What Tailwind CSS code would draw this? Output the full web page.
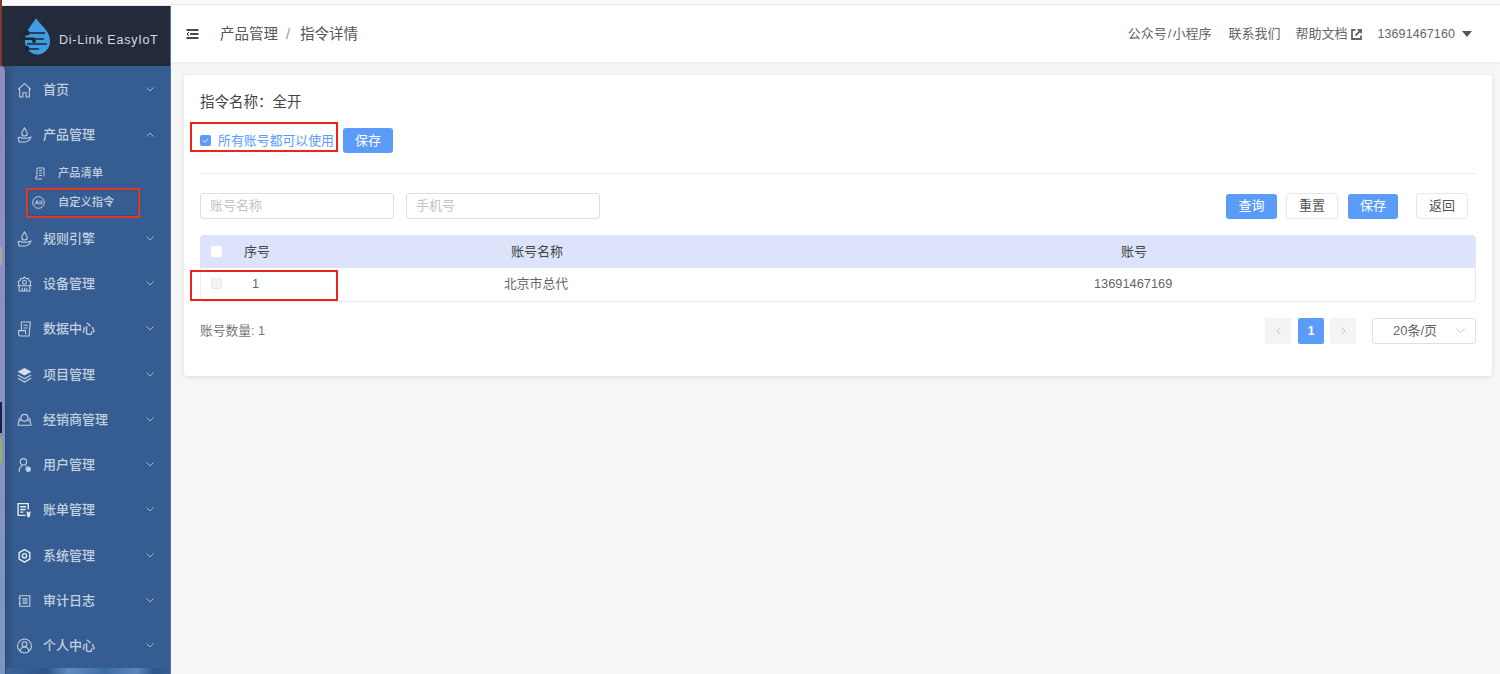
<!DOCTYPE html>
<html lang="zh">
<head>
<meta charset="utf-8">
<script src="https://cdn.jsdelivr.net/npm/@tailwindcss/browser@4"></script>
<title>指令详情</title>
</head>
<body class="m-0 h-[674px] w-[1500px] overflow-hidden bg-[#f6f6f6] font-['Liberation_Sans','Noto_Sans_CJK_SC',sans-serif] text-[13px] text-[#555]">
<div class="relative flex h-[674px] w-[1500px]">
  <!-- Sidebar -->
  <aside class="relative flex h-full w-[171px] shrink-0 flex-col overflow-hidden bg-[#365d91]">
    <div class="h-[6px] shrink-0 bg-[#fafafa] border-b border-[#e6e6e6]"></div>
    <div class="flex h-[60px] shrink-0 items-center bg-[#232a3a] pl-[21px]">
      <svg class="h-[39px] w-[32px]" viewBox="0 0 32 39">
        <path d="M15 1C12 7 4 13 4 24a12.500 13.500 0 0 0 25 0C29 13 18 7 15 1Z" fill="#419be0"/>
        <g stroke="#1b2534" stroke-width="1.300" fill="none"><path d="M5 16h19M1 22h22M6 27h20M5 32h13"/></g>
        <g fill="#1b2534"><circle cx="6" cy="16" r="2.500"/><circle cx="13" cy="24" r="2"/><circle cx="6" cy="31" r="2.200"/><path d="M1 20.500h12v2.500H1Z"/></g>
      </svg>
      <span class="ml-[6px] mt-[8px] whitespace-nowrap text-[12.5px] tracking-[0.75px] text-[#d5dbe4]">Di-Link EasyIoT</span>
    </div>
    <nav class="flex flex-col pl-[17px] pr-[17px] pt-[1px] text-[#c3d0e0]">
      <a class="flex h-[45px] items-center gap-[11px] text-[13px] font-medium">
        <svg class="h-[16px] w-[15px] shrink-0" viewBox="0 0 14 15" fill="none" stroke="#c3d0e0" stroke-width="1"><path d="M1 7 7 1.500 13 7M2.500 6v8h3v-4h3v4h3V6"/></svg>
        <span class="flex-1">首页</span>
        <svg class="h-[5px] w-[8px]" viewBox="0 0 8 5" fill="none" stroke="#9fb4cf"><path d="m.5.5 3.500 3.500 3.500-3.500"/></svg>
      </a>
      <a class="flex h-[45px] items-center gap-[11px] text-[13px] font-medium">
        <svg class="h-[16px] w-[15px] shrink-0" viewBox="0 0 14 15" fill="none" stroke="#c3d0e0"><path d="M7 1C6 3 4.500 4 4.500 6a2.500 2.500 0 0 0 5 0C9.500 4 8 3 7 1ZM1 10c2-1 3 .5 5 .5h3c2 0 3-1 4-1-1 3-3 4.500-6 4.500H2Z"/></svg>
        <span class="flex-1">产品管理</span>
        <svg class="h-[5px] w-[8px]" viewBox="0 0 8 5" fill="none" stroke="#9fb4cf"><path d="m.5 4.500 3.500-3.500 3.500 3.500"/></svg>
      </a>
      <a class="mt-[2px] flex h-[29px] items-center gap-[12px] pl-[17px] text-[11.25px] font-medium">
        <svg class="h-[13px] w-[12px] shrink-0" viewBox="0 0 12 13" fill="none" stroke="#c3d0e0"><path d="M3 1h7v8.500M3 1v9H1.500v1.500A1 1 0 0 0 3 12h5M5 3.500h3M5 6h3M5 8.500h3"/></svg>
        <span>产品清单</span>
      </a>
      <a class="flex h-[29px] items-center gap-[13px] pl-[15px] text-[11.25px] font-medium">
        <svg class="h-[13px] w-[13px] shrink-0" viewBox="0 0 13 13" fill="none" stroke="#c3d0e0"><circle cx="6.500" cy="6.500" r="5.800"/><path d="M3.200 8.500 5 4.500l1.500 4M4 7h2M8 4.500v4M9.800 4.500v4"/></svg>
        <span>自定义指令</span>
      </a>
      <a class="-mt-[1px] flex h-[45px] items-center gap-[11px] text-[13px] font-medium">
        <svg class="h-[16px] w-[15px] shrink-0" viewBox="0 0 14 15" fill="none" stroke="#c3d0e0"><path d="M7 1C6 3 4.500 4 4.500 6a2.500 2.500 0 0 0 5 0C9.500 4 8 3 7 1ZM1 10c2-1 3 .5 5 .5h3c2 0 3-1 4-1-1 3-3 4.500-6 4.500H2Z"/></svg>
        <span class="flex-1">规则引擎</span>
        <svg class="h-[5px] w-[8px]" viewBox="0 0 8 5" fill="none" stroke="#9fb4cf"><path d="m.5.5 3.500 3.500 3.500-3.500"/></svg>
      </a>
      <a class="flex h-[45px] items-center gap-[11px] text-[13px] font-medium">
        <svg class="h-[16px] w-[15px] shrink-0" viewBox="0 0 14 15" fill="none" stroke="#c3d0e0"><path d="M7 1l1.500 1.500 2-.3.500 2 2 1-.7 2 .7 2H1l.7-2-.7-2 2-1 .5-2 2 .3ZM2 9.500V14h10V9.500M5 14v-3M7 14v-3M9 14v-3"/><circle cx="7" cy="6" r="1.800"/></svg>
        <span class="flex-1">设备管理</span>
        <svg class="h-[5px] w-[8px]" viewBox="0 0 8 5" fill="none" stroke="#9fb4cf"><path d="m.5.5 3.500 3.500 3.500-3.500"/></svg>
      </a>
      <a class="flex h-[45px] items-center gap-[11px] text-[13px] font-medium">
        <svg class="h-[16px] w-[15px] shrink-0" viewBox="0 0 14 15" fill="none" stroke="#c3d0e0"><path d="M4 1h8.500L11.500 10V14H3A1.500 1.500 0 0 1 1.500 12.500V9H8v3.500M4 1v8M6 4h4M6 6.500h4"/></svg>
        <span class="flex-1">数据中心</span>
        <svg class="h-[5px] w-[8px]" viewBox="0 0 8 5" fill="none" stroke="#9fb4cf"><path d="m.5.5 3.500 3.500 3.500-3.500"/></svg>
      </a>
      <a class="mt-[1px] flex h-[45px] items-center gap-[11px] text-[13px] font-medium">
        <svg class="h-[16px] w-[15px] shrink-0" viewBox="0 0 14 15"><path d="M7 1l6.500 3.500L7 8 .5 4.500Z" fill="#d5deea"/><path d="M.8 7.500 7 11l6.200-3.500M.8 10.500 7 14l6.200-3.500" fill="none" stroke="#c3d0e0" stroke-width="1.200"/></svg>
        <span class="flex-1">项目管理</span>
        <svg class="h-[5px] w-[8px]" viewBox="0 0 8 5" fill="none" stroke="#9fb4cf"><path d="m.5.5 3.500 3.500 3.500-3.500"/></svg>
      </a>
      <a class="flex h-[45px] items-center gap-[11px] text-[13px] font-medium">
        <svg class="h-[16px] w-[15px] shrink-0" viewBox="0 0 14 15" fill="none" stroke="#c3d0e0"><circle cx="7" cy="5.500" r="3.300"/><path d="M4.500 7.500C2 7.500 1 10 1 12.500h12C13 10 12 7.500 9.500 7.500"/><path d="M3 5.500C2 6 1.500 7 1.500 8M11 5.500c1 .5 1.500 1.500 1.500 2.500"/></svg>
        <span class="flex-1">经销商管理</span>
        <svg class="h-[5px] w-[8px]" viewBox="0 0 8 5" fill="none" stroke="#9fb4cf"><path d="m.5.5 3.500 3.500 3.500-3.500"/></svg>
      </a>
      <a class="flex h-[45px] items-center gap-[11px] text-[13px] font-medium">
        <svg class="h-[16px] w-[15px] shrink-0" viewBox="0 0 14 15" fill="none" stroke="#c3d0e0"><circle cx="6" cy="4.500" r="3"/><path d="M2 14c0-3 1-5 3-6M8 8l1 1"/><circle cx="10.500" cy="11.500" r="2" fill="#c3d0e0"/></svg>
        <span class="flex-1">用户管理</span>
        <svg class="h-[5px] w-[8px]" viewBox="0 0 8 5" fill="none" stroke="#9fb4cf"><path d="m.5.5 3.500 3.500 3.500-3.500"/></svg>
      </a>
      <a class="flex h-[45px] items-center gap-[11px] text-[13px] font-medium">
        <svg class="h-[16px] w-[15px] shrink-0" viewBox="0 0 14 15" fill="none" stroke="#e8edf4" stroke-width="1.300"><path d="M8 12.500H1V1.500h9.500V7M3 4.500h5.500M3 7h5M3 9.500h3"/><path d="M9 9l1.800 2L12.600 9M9.200 11.500h3.200M9.200 13h3.200M10.800 11v3.500"/></svg>
        <span class="flex-1">账单管理</span>
        <svg class="h-[5px] w-[8px]" viewBox="0 0 8 5" fill="none" stroke="#9fb4cf"><path d="m.5.5 3.500 3.500 3.500 -3.500"/></svg>
      </a>
      <a class="mt-[1px] flex h-[45px] items-center gap-[11px] text-[13px] font-medium">
        <svg class="h-[16px] w-[15px] shrink-0" viewBox="0 0 14 15" fill="none" stroke="#e8edf4" stroke-width="1.300"><path d="M7 1.500 12 4.300v6L7 13.200 2 10.300v-6Z"/><circle cx="7" cy="7.300" r="2"/></svg>
        <span class="flex-1">系统管理</span>
        <svg class="h-[5px] w-[8px]" viewBox="0 0 8 5" fill="none" stroke="#9fb4cf"><path d="m.5.5 3.500 3.500 3.500-3.500"/></svg>
      </a>
      <a class="flex h-[45px] items-center gap-[11px] text-[13px] font-medium">
        <svg class="h-[16px] w-[15px] shrink-0" viewBox="0 0 14 15" fill="none" stroke="#c3d0e0"><path d="M2.500 2.500h9.500v10H2.500ZM1.500 5h2M1.500 10h2M5 5.500h5M5 7.500h5M5 9.500h5"/></svg>
        <span class="flex-1">审计日志</span>
        <svg class="h-[5px] w-[8px]" viewBox="0 0 8 5" fill="none" stroke="#9fb4cf"><path d="m.5.5 3.500 3.500 3.500-3.500"/></svg>
      </a>
      <a class="flex h-[45px] items-center gap-[11px] text-[13px] font-medium">
        <svg class="h-[16px] w-[15px] shrink-0" viewBox="0 0 14 15" fill="none" stroke="#c3d0e0"><circle cx="7" cy="7.500" r="6.500"/><circle cx="7" cy="5.800" r="2.300"/><path d="M3 12c.5-2 2-3.500 4-3.500s3.500 1.500 4 3.500"/></svg>
        <span class="flex-1">个人中心</span>
        <svg class="h-[5px] w-[8px]" viewBox="0 0 8 5" fill="none" stroke="#9fb4cf"><path d="m.5.5 3.500 3.500 3.500-3.500"/></svg>
      </a>
    </nav>
    <!-- Window behind: left strip, shading and wallpaper sliver -->
    <div class="pointer-events-none absolute left-[6px] top-[66px] h-[608px] w-[10px] bg-[linear-gradient(90deg,#2f5280,#365d91)]"></div>
    <div class="pointer-events-none absolute left-0 top-[66px] h-[608px] w-[5px] rounded-tr-[5px] bg-[linear-gradient(180deg,#8f8dbd,#8b90c0_45%,#7b97c2)]"></div>
    <div class="pointer-events-none absolute left-[5px] top-[66px] h-[608px] w-px bg-[#2c4d78]"></div>
    <div class="pointer-events-none absolute left-0 top-0 h-[66px] w-[2px] bg-[#7a3b33]"></div>
    <div class="pointer-events-none absolute left-0 top-[247px] h-[18px] w-[2px] bg-[#a9a59f]"></div>
    <div class="pointer-events-none absolute left-0 top-[402px] h-[31px] w-[2px] bg-[#1c1f45]"></div>
    <div class="pointer-events-none absolute left-0 top-[438px] h-[25px] w-[2px] bg-[#8cb56a]"></div>
    <div class="pointer-events-none absolute bottom-0 left-[6px] h-[6px] w-[164px] bg-[linear-gradient(90deg,#3a6498,#305689_25%,#5f8bbf_38%,#3d6ca5_60%,#5b86bb_80%,#2f568c_90%,#365d91)]"></div>
    <div class="pointer-events-none absolute right-0 top-[6px] h-[668px] w-px bg-[#4f76a6]"></div>
  </aside>

  <!-- Main -->
  <div class="flex min-w-0 flex-1 flex-col">
    <div class="h-[5px] shrink-0 bg-[#fafafa] border-b border-[#e6e6e6]"></div>
    <header class="flex h-[57px] shrink-0 items-center justify-between bg-white pl-[15px] pr-[28px] pt-[1px] shadow-[0_1px_3px_rgba(0,0,0,0.06)]">
      <div class="flex items-center text-[14.5px] text-[#555]">
        <svg class="h-[10px] w-[13px]" viewBox="0 0 13 10" fill="none" stroke="#111" stroke-width="1.500"><path d="M.5 1h12M4 5h8.500M.5 9h12"/><path d="M3 3.200 1 5l2 1.800" stroke-width="1"/></svg>
        <span class="ml-[21px] pt-[1px]">产品管理</span>
        <span class="ml-[8px] mr-[10px] pt-[1px] text-[#999]">/</span>
        <span class="pt-[1px]">指令详情</span>
      </div>
      <div class="flex items-center text-[13px] text-[#666]">
        <span>公众号<span class="px-[1px]">/</span>小程序</span>
        <span class="ml-[17px]">联系我们</span>
        <span class="ml-[15px]">帮助文档</span>
        <svg class="ml-[4px] h-[11px] w-[11px]" viewBox="0 0 11 11" fill="none" stroke="#666" stroke-width="1.800"><path d="M4.500 1H1v9h9V6.500"/><path d="M4.500 6.500 10 1M6.500 .8h3.700v3.700"/></svg>
        <span class="ml-[15px] text-[12.5px] tracking-[0.1px]">13691467160</span>
        <span class="ml-[7px] h-0 w-0 border-x-[5.5px] border-t-[6px] border-x-transparent border-t-[#555]"></span>
      </div>
    </header>

    <main class="flex-1 pl-[13px] pr-[8px] pt-[13px]">
      <section class="h-[301px] rounded-[3px] bg-white px-[16px] pt-[17px] shadow-[0_1px_4px_rgba(0,0,0,0.1)]">
        <p class="h-[20px] text-[14.5px] leading-[20px] text-[#444]">指令名称：全开</p>
        <div class="mt-[16px] flex h-[25px] items-center">
          <span class="flex h-[11px] w-[11px] items-center justify-center rounded-[2px] bg-[#5a9cf8]">
            <svg class="h-[7px] w-[7px]" viewBox="0 0 8 8" fill="none" stroke="#fff"><path d="m1 4 2 2 4-4"/></svg>
          </span>
          <span class="ml-[7px] whitespace-nowrap text-[12.9px] text-[#5a9cf8]">所有账号都可以使用</span>
          <button class="ml-[9px] h-[25px] w-[50px] rounded-[3px] bg-[#5a9cf8] text-[13px] text-white">保存</button>
        </div>
        <div class="mt-[20px] h-px bg-[#ebeef5]"></div>
        <div class="mt-[19px] flex h-[26px] items-center pr-[8px]">
          <div class="flex h-[26px] w-[194px] items-center rounded-[3px] border border-[#dcdfe6] pl-[9px] text-[13px] text-[#c0c4cc]">账号名称</div>
          <div class="ml-[12px] flex h-[26px] w-[194px] items-center rounded-[3px] border border-[#dcdfe6] pl-[9px] text-[13px] text-[#c0c4cc]">手机号</div>
          <div class="flex-1"></div>
          <button class="h-[25px] w-[51px] rounded-[3px] bg-[#5a9cf8] text-[13px] text-white">查询</button>
          <button class="ml-[9px] h-[26px] w-[52px] rounded-[3px] border border-[#e4e7ed] bg-white text-[13px] text-[#555]">重置</button>
          <button class="ml-[10px] h-[25px] w-[50px] rounded-[3px] bg-[#5a9cf8] text-[13px] text-white">保存</button>
          <button class="ml-[18px] h-[26px] w-[52px] rounded-[3px] border border-[#e4e7ed] bg-white text-[13px] text-[#555]">返回</button>
        </div>
        <div class="mt-[16px] overflow-hidden rounded-[4px] border-b border-r border-[#e4e7ef]">
          <div class="flex h-[33px] items-center bg-[#dde3fb] text-[13px] text-[#444]">
            <span class="ml-[11px] h-[11px] w-[11px] rounded-[2px] bg-white"></span>
            <span class="ml-[22px] w-[260px]">序号</span>
            <span class="absolute left-[511px]">账号名称</span>
            <span class="absolute left-[1121px]">账号</span>
          </div>
          <div class="flex h-[33px] items-center border-l border-[#ebeef5] bg-white pb-[2px] text-[12.8px] text-[#666]">
            <span class="ml-[10px] h-[11px] w-[11px] rounded-[2px] border border-[#e4e7ed] bg-[#f2f4f8]"></span>
            <span class="ml-[30px] w-[200px]">1</span>
            <span class="absolute left-[504px]">北京市总代</span>
            <span class="absolute left-[1094px]">13691467169</span>
          </div>
        </div>
        <div class="mt-[16px] flex h-[26px] items-center">
          <span class="text-[12.75px] text-[#777]">账号数量: 1</span>
          <div class="flex-1"></div>
          <span class="flex h-[26px] w-[26px] items-center justify-center rounded-[2px] bg-[#f4f4f7]"><svg class="h-[8px] w-[5px]" viewBox="0 0 5 8" fill="none" stroke="#c0c4cc"><path d="M4.500.5 1 4l3.500 3.500"/></svg></span>
          <span class="ml-[7px] flex h-[26px] w-[26px] items-center justify-center rounded-[2px] bg-[#5a9cf8] text-[12px] font-bold text-white">1</span>
          <span class="ml-[6px] flex h-[26px] w-[26px] items-center justify-center rounded-[2px] bg-[#f4f4f7]"><svg class="h-[8px] w-[5px]" viewBox="0 0 5 8" fill="none" stroke="#c0c4cc"><path d="M.5.5 4 4 .5 7.500"/></svg></span>
          <div class="relative ml-[16px] flex h-[26px] w-[104px] items-center rounded-[3px] border border-[#dcdfe6] pl-[20px] text-[13px] text-[#666]">20条/页
            <svg class="absolute right-[10px] top-[9px] h-[6px] w-[9px]" viewBox="0 0 9 6" fill="none" stroke="#c0c4cc"><path d="m.5.5 4 4 4-4"/></svg>
          </div>
        </div>
      </section>
    </main>
  </div>

  <!-- Red annotation boxes -->
  <div class="pointer-events-none absolute left-[190px] top-[122px] h-[30px] w-[148px] border-2 border-[#e8261c]"></div>
  <div class="pointer-events-none absolute left-[26px] top-[188px] h-[30px] w-[114px] border-2 border-[#e0382a] shadow-[inset_0_0_0_1px_#2c5585]"></div>
  <div class="pointer-events-none absolute left-[190px] top-[270px] h-[31px] w-[148px] border-2 border-[#e8261c]"></div>
</div>
</body>
</html>
